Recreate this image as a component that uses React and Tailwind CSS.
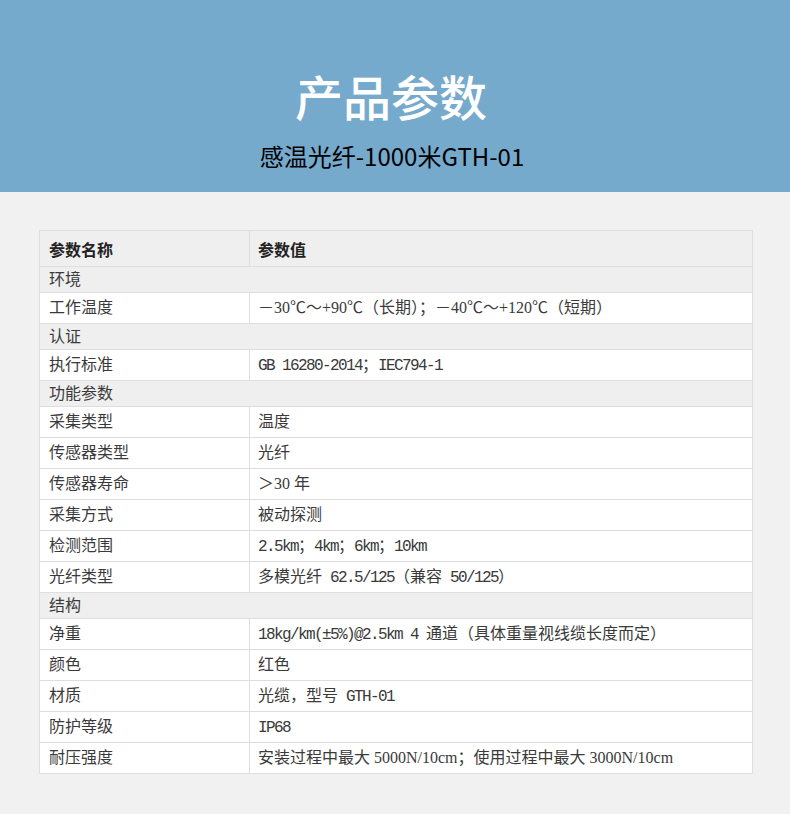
const rows = [
  { group: '环境' },
  { name: '工作温度', value: '－30℃～+90℃（长期）；－40℃～+120℃（短期）' },
  { group: '认证' },
  { name: '执行标准', value: 'GB 16280-2014；IEC794-1', mono: true },
  { group: '功能参数' },
  { name: '采集类型', value: '温度' },
  { name: '传感器类型', value: '光纤' },
  { name: '传感器寿命', value: '＞30 年' },
  { name: '采集方式', value: '被动探测' },
  { name: '检测范围', value: '2.5km；4km；6km；10km', mono: true },
  { name: '光纤类型', value: '多模光纤 62.5/125（兼容 50/125）', mono: true },
  { group: '结构' },
  { name: '净重', value: '18kg/km(±5%)@2.5km 4 通道（具体重量视线缆长度而定）', mono: true },
  { name: '颜色', value: '红色' },
  { name: '材质', value: '光缆，型号 GTH-01', mono: true },
  { name: '防护等级', value: 'IP68', mono: true },
  { name: '耐压强度', value: '安装过程中最大 5000N/10cm；使用过程中最大 3000N/10cm' },
]

// ASCII runs in some rows look like SimSun's half-width latin
function Value({ text, mono }) {
  if (!mono) return text
  return text.split(/([\x20-\x7e±]+)/).map((part, i) =>
    i % 2 === 1 ? (
      <span key={i} className="font-['Liberation_Mono',monospace] tracking-[-1.6px]">{part}</span>
    ) : (
      part
    )
  )
}

export default function App() {
  return (
    <div className="min-h-screen w-[790px] bg-[#f1f1f1]">
      {/* Banner */}
      <div className="h-[192px] bg-[#76aacd] text-center font-['Noto_Sans_CJK_SC',sans-serif]">
        <h1 className="pt-[71px] pr-[8px] text-[48px] leading-[48px] font-medium text-white">产品参数</h1>
        <p className="mt-[25px] pr-[6px] text-[24px] leading-[24px] text-black">感温光纤-1000米GTH-01</p>
      </div>

      {/* Table */}
      <div className="ml-[39px] mt-[38px] w-[714px] border-t border-l border-r border-[#dedede] bg-white text-[16px] text-[#3a3a3a] font-['Liberation_Serif','Noto_Sans_CJK_SC',serif]">
        <div className="flex h-[36px] border-b border-[#dedede] bg-[#efefef] font-bold text-[#222] font-['Noto_Sans_CJK_SC',sans-serif]">
          <div className="flex w-[210px] items-center border-r border-[#dedede] pl-[9px]">参数名称</div>
          <div className="flex flex-1 items-center pl-[8px]">参数值</div>
        </div>
        {rows.map((r, i) =>
          r.group ? (
            <div key={i} className="flex h-[26px] items-center border-b border-[#dedede] bg-[#efefef] pl-[9px]">
              {r.group}
            </div>
          ) : (
            <div key={i} className="flex h-[31px] border-b border-[#dedede] bg-white">
              <div className="flex w-[210px] items-center border-r border-[#dedede] pl-[9px]">{r.name}</div>
              <div className="flex-1 self-center pl-[8px] whitespace-pre">
                <Value text={r.value} mono={r.mono} />
              </div>
            </div>
          )
        )}
      </div>
    </div>
  )
}
